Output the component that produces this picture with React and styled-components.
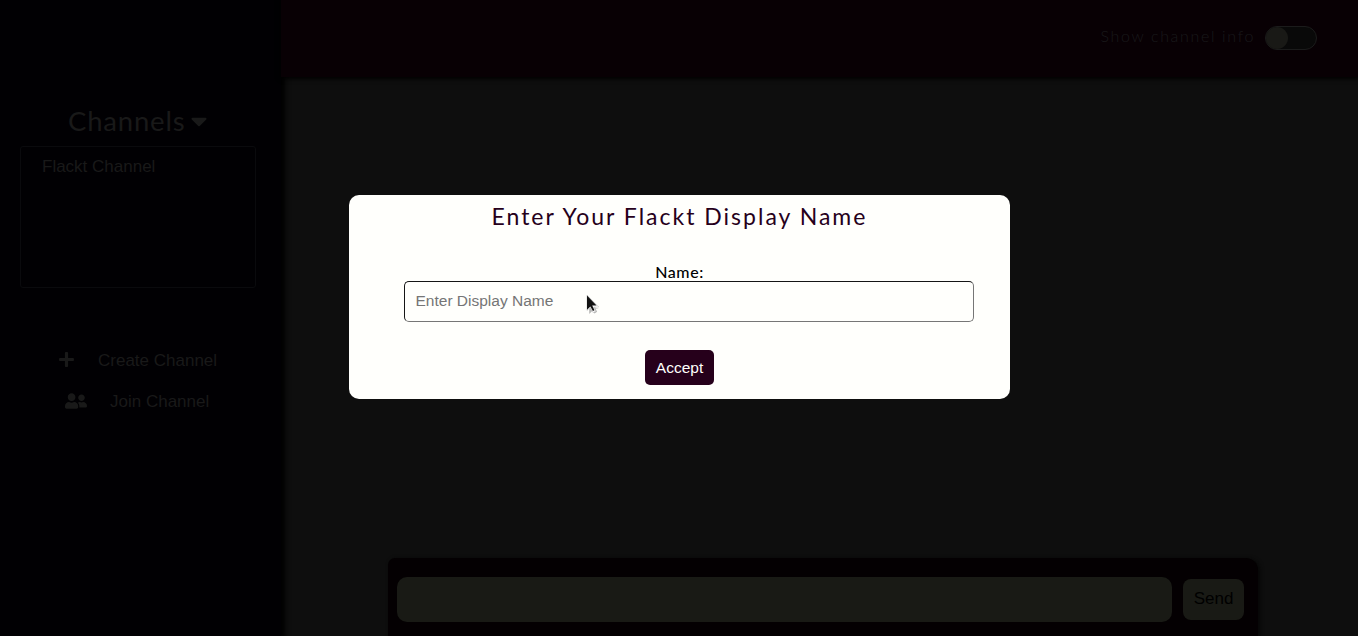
import React from "react";
import styled, { createGlobalStyle } from "styled-components";
import { FaCaretDown, FaPlus, FaUserFriends } from "react-icons/fa";

const GlobalStyle = createGlobalStyle`
  * { box-sizing: border-box; }
  body {
    margin: 0;
    background: #0e0e0e;
    font-family: "Liberation Sans", Arial, sans-serif;
    overflow: hidden;
  }
`;

const rounded = `Lato, "Liberation Sans", sans-serif`;

const Page = styled.div`
  display: flex;
  height: 636px;
  width: 1358px;
  position: relative;
  overflow: hidden;
`;

const Sidebar = styled.aside`
  flex: 0 0 281px;
  padding: 103px 25px 0 20px;
  background: #010003;
  color: #191919;
  box-shadow: 2px 0 5px 2px #000;
  z-index: 1;
`;

const ChannelsHeading = styled.h2`
  display: flex;
  align-items: center;
  margin: 0 0 8px 48px;
  height: 35px;
  font: 400 27.5px/35px ${rounded};
  letter-spacing: 0.8px;
  white-space: nowrap;

  svg { margin: 1px 0 0 1px; flex: none; }
`;

const ChannelList = styled.ul`
  list-style: none;
  margin: 0;
  padding: 10px 21px;
  height: 142px;
  border: 1px solid #0a0a0d;
  border-radius: 3px;
`;

const ChannelItem = styled.li`
  font-size: 17px;
  line-height: 20px;
`;

const Actions = styled.div`
  display: flex;
  flex-direction: column;
  gap: 21px;
  margin-top: 63px;
`;

const Action = styled.div`
  display: flex;
  align-items: center;
  height: 20px;
  padding-left: ${(p) => p.$indent}px;
  gap: ${(p) => p.$gap}px;
  font-size: 17px;
  line-height: 20px;
  white-space: nowrap;

  svg { flex: none; margin-bottom: 3px; }
`;

const Main = styled.main`
  flex: 1;
  display: flex;
  flex-direction: column;
  justify-content: space-between;
`;

const Header = styled.header`
  display: flex;
  align-items: center;
  justify-content: flex-end;
  gap: 10px;
  height: 77px;
  padding: 0 41px 2px 0;
  background: #080004;
  box-shadow: 0 1px 4px 1px #000;
  z-index: 2;
`;

const InfoLabel = styled.span`
  margin-bottom: 3px;
  font: 300 16px/20px ${rounded};
  letter-spacing: 1.65px;
  color: #19191b;
`;

const Toggle = styled.div`
  width: 52px;
  height: 24px;
  border: 1px solid #1b1b1b;
  border-radius: 12px;
  background: #090909;
`;

const Knob = styled.div`
  width: 22px;
  height: 22px;
  border-radius: 50%;
  background: #191916;
`;

const Composer = styled.form`
  display: flex;
  align-items: flex-start;
  gap: 11px;
  width: 870px;
  height: 78px;
  margin-left: 107px;
  padding: 19px 14px 0 9px;
  background: #040002;
  border-radius: 7px 12px 0 0;
  box-shadow: 2px 1px 4px #060606;
`;

const MessageField = styled.div`
  width: 775px;
  height: 45px;
  border-radius: 10px;
  background: #191a15;
`;

const SendButton = styled.button`
  width: 61px;
  height: 41px;
  margin: 2px 0 0;
  padding: 0 0 2px;
  border: 0;
  border-radius: 8px;
  background: #191a15;
  color: #000;
  font: 17px/38px "Liberation Sans", Arial, sans-serif;
`;

const Modal = styled.section`
  position: absolute;
  z-index: 5;
  left: 349px;
  top: 195px;
  width: 661px;
  height: 204px;
  display: flex;
  flex-direction: column;
  align-items: center;
  background: #fffffc;
  border-radius: 10px;
`;

const Title = styled.h1`
  margin: 7px 0 0;
  height: 28px;
  font: 400 23px/28px ${rounded};
  letter-spacing: 2px;
  color: #26001b;
  white-space: nowrap;
`;

const NameLabel = styled.label`
  margin-top: 33px;
  height: 18px;
  font: 500 16px/18px ${rounded};
  letter-spacing: 0.6px;
  color: #000;
`;

const NameInput = styled.input`
  width: 570px;
  height: 41px;
  margin: 0 0 0 19px;
  padding: 0 10.5px 2px;
  border: 1px solid;
  border-color: #151515 #767676 #767676 #151515;
  border-radius: 5px;
  background: transparent;
  font: 15.5px "Liberation Sans", Arial, sans-serif;
  outline: none;

  &::placeholder { color: #757575; opacity: 1; }
`;

const AcceptButton = styled.button`
  width: 69px;
  height: 35px;
  margin-top: 28px;
  padding: 0;
  border: 0;
  border-radius: 5px;
  background: #26001b;
  color: #fffffc;
  font: 15.5px/35px "Liberation Sans", Arial, sans-serif;
`;

const Cursor = styled.svg`
  position: absolute;
  z-index: 6;
  left: 585px;
  top: 294px;
`;

export default function App() {
  return (
    <>
      <GlobalStyle />
      <Page>
        <Sidebar>
          <ChannelsHeading>
            Channels <FaCaretDown size={26} />
          </ChannelsHeading>
          <ChannelList>
            <ChannelItem>Flackt Channel</ChannelItem>
          </ChannelList>
          <Actions>
            <Action $indent={38} $gap={23}>
              <FaPlus size={17} /> Create Channel
            </Action>
            <Action $indent={45} $gap={23}>
              <FaUserFriends size={22} /> Join Channel
            </Action>
          </Actions>
        </Sidebar>
        <Main>
          <Header>
            <InfoLabel>Show channel info</InfoLabel>
            <Toggle><Knob /></Toggle>
          </Header>
          <Composer>
            <MessageField />
            <SendButton type="button">Send</SendButton>
          </Composer>
        </Main>
        <Modal>
          <Title>Enter Your Flackt Display Name</Title>
          <NameLabel htmlFor="name">Name:</NameLabel>
          <NameInput id="name" placeholder="Enter Display Name" />
          <AcceptButton type="button">Accept</AcceptButton>
        </Modal>
        <Cursor width="16" height="22" viewBox="0 0 16 22">
          <path d="M4.2 12v8l3-3 2.3 2.4 2.6-1.6-1.6-3.3h3.4z" fill="#888" opacity=".6" />
          <path d="M2 1v15.5l3.4-3.1 2.6 5.2 2.8-1.4-2-4.2h5z" fill="#fff" stroke="#bbb" strokeWidth=".5" />
          <path d="M2 1.6v14.2l3.4-3.4 2.5 4.7 1.6-.9-2.3-4.6h4.4z" fill="#111" />
        </Cursor>
      </Page>
    </>
  );
}
